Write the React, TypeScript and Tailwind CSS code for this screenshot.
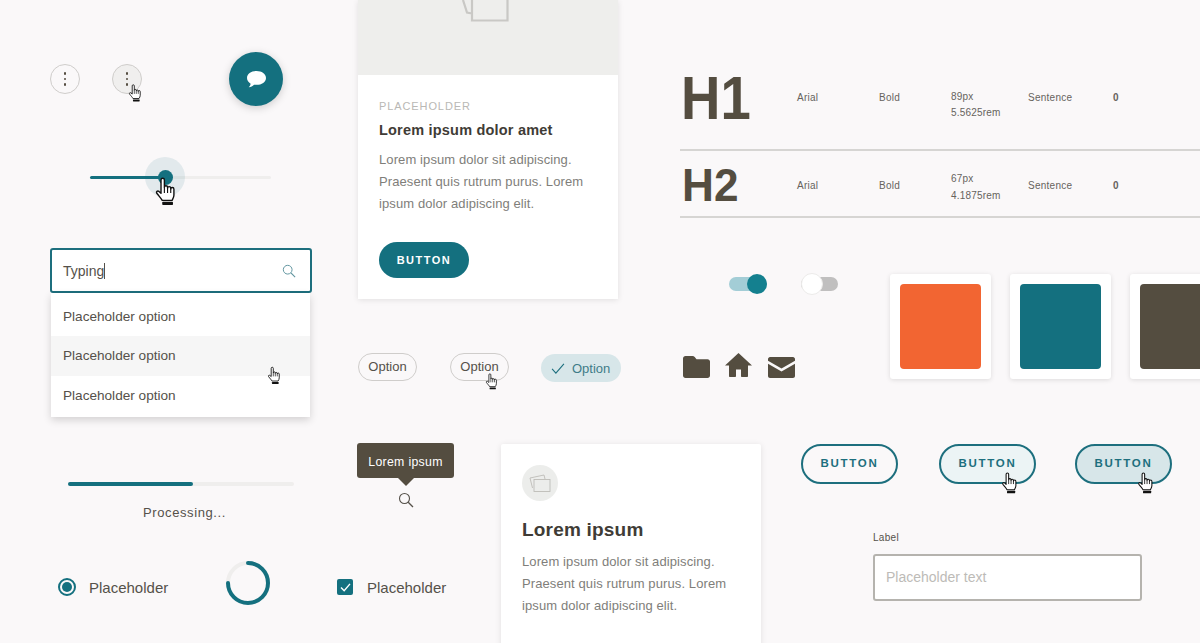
import React from "react";

function Hand({ className }: { className: string }) {
  return (
    <svg viewBox="0 0 24 31" className={className}>
      <path
        d="M7.2 3.2a1.8 1.8 0 0 1 3.6 0V11a1.7 1.7 0 0 1 3.4 0v1a1.7 1.7 0 0 1 3.4 0v1a1.7 1.7 0 0 1 3.4 0v6.5c0 2.2-1 3.6-2 5.5H8.5c-1-2-3.2-4.2-5.8-7.6-1.1-1.6.8-3.2 2.3-2l2.2 2z"
        fill="#fff"
        stroke="#111"
        strokeWidth="1.5"
        strokeLinejoin="round"
      />
      <path d="M10.8 11v6M14.2 12v5M17.6 13v4" stroke="#111" strokeWidth="1.2" fill="none" />
      <rect x="8.5" y="26.5" width="11.5" height="3.5" rx="0.8" fill="#111" />
    </svg>
  );
}

function Kebab({ hover, children }: { hover?: boolean; children?: React.ReactNode }) {
  return (
    <div
      className={`relative flex h-[30px] w-[30px] flex-col items-center justify-center gap-[3px] rounded-full border border-[#cfcdcb] ${
        hover ? "bg-[#f0efee]" : ""
      }`}
    >
      <span className="h-[2.5px] w-[2.5px] rounded-full bg-[#544d40]" />
      <span className="h-[2.5px] w-[2.5px] rounded-full bg-[#544d40]" />
      <span className="h-[2.5px] w-[2.5px] rounded-full bg-[#544d40]" />
      {children}
    </div>
  );
}

function SearchIcon({ className, color }: { className: string; color: string }) {
  return (
    <svg viewBox="0 0 16 16" className={className} fill="none" stroke={color} strokeWidth="1.1">
      <circle cx="6.5" cy="6.5" r="5" />
      <path d="M10.2 10.2 15 15" strokeWidth="1.3" />
    </svg>
  );
}

function MetaRow({ size, rem, big, h, sizeCell }: { size: string; rem: string; big: string; h: string; sizeCell: string }) {
  return (
    <>
      <div className="w-[117px]">
        <div className={big}>{h}</div>
      </div>
      <div className="w-[82px] text-[10px] tracking-[0.25px] text-[#66635d]">Arial</div>
      <div className="w-[72px] text-[10px] tracking-[0.25px] text-[#66635d]">Bold</div>
      <div className={sizeCell}>
        <div>{size}</div>
        <div>{rem}</div>
      </div>
      <div className="w-[85px] text-[10px] tracking-[0.25px] text-[#66635d]">Sentence</div>
      <div className="text-[10px] font-bold text-[#66635d]">0</div>
    </>
  );
}

function OutlineButton({ bg, cursor }: { bg: string; cursor?: boolean }) {
  return (
    <div
      className={`relative flex h-[40px] w-[97px] items-center justify-center rounded-full border-2 border-[#1d6f7e] text-[11.5px] font-bold tracking-[1.7px] text-[#1d6f7e] ${bg}`}
    >
      BUTTON
      {cursor && <Hand className="absolute left-[60px] top-[26px] h-[22px] w-[17px]" />}
    </div>
  );
}

export default function App() {
  return (
    <div className="h-[643px] w-[1200px] overflow-hidden bg-[#faf8f9] font-['Liberation_Sans',Arial,sans-serif]">
      <div className="flex h-[430px] items-start">
        {/* column 1 */}
        <div className="ml-[50px] w-[262px] pt-[52px]">
          <div className="flex items-center">
            <Kebab />
            <div className="ml-[32px]">
              <Kebab hover>
                <Hand className="absolute left-[15px] top-[19px] h-[18px] w-[14px]" />
              </Kebab>
            </div>
            <div className="ml-[87px] flex h-[54px] w-[54px] items-center justify-center rounded-full bg-[#14707f] shadow-[0_2px_8px_rgba(0,0,0,0.18)]">
              <svg viewBox="0 0 22 20" className="h-[19px] w-[21px]" fill="#fff">
                <path d="M11 1c5.5 0 10 3 10 7.3s-4.5 7.3-10 7.3c-.9 0-1.8-.1-2.6-.2-1.5 1.5-3.3 2.4-5.6 2.8 1.1-1 1.8-2.2 2-3.8C2.600 12.800 1 10.700 1 8.300 1 4 5.500 1 11 1z" />
              </svg>
            </div>
          </div>

          <div className="relative ml-[40px] mt-[51px] flex h-[40px] w-[181px] items-center">
            <div className="h-[3px] w-[75px] rounded-l-full bg-[#14707f]" />
            <div className="h-[3px] flex-1 rounded-r-full bg-[#efeeed]" />
            <div className="absolute left-[55px] top-0 flex h-[40px] w-[40px] items-center justify-center rounded-full bg-[#14707f]/10">
              <div className="h-[15px] w-[15px] rounded-full bg-[#14707f]" />
            </div>
            <Hand className="absolute left-[64px] top-[20px] h-[29px] w-[23px]" />
          </div>

          <div className="mt-[51px] flex h-[45px] w-[262px] items-center justify-between rounded-[3px] border-2 border-[#1d6f7e] bg-white pl-[11px] pr-[14px] text-[14px] text-[#55514a]">
            <span className="border-r border-[#55514a] leading-[16px]">Typing</span>
            <SearchIcon className="h-[14px] w-[14px]" color="#5f949e" />
          </div>
          <div className="ml-[1px] w-[259px] bg-white pt-[3px] text-[13.6px] text-[#55514a] shadow-[0_3px_8px_rgba(0,0,0,0.16)]">
            <div className="flex h-[39.500px] items-center pl-[12px] pt-[3px]">Placeholder option</div>
            <div className="relative flex h-[40px] items-center bg-[#f6f6f6] pl-[12px] pt-[1px]">
              Placeholder option
              <Hand className="absolute left-[216px] top-[30px] h-[19px] w-[14px]" />
            </div>
            <div className="flex h-[41px] items-center pl-[12px]">Placeholder option</div>
          </div>
        </div>

        {/* column 2 */}
        <div className="ml-[46px] w-[264px]">
          <div className="w-[260px] bg-white shadow-[0_1px_6px_rgba(0,0,0,0.1)]">
            <div className="h-[75px] bg-[#eeeeec] pl-[104px]">
              <svg viewBox="0 0 50 24" className="h-[24px] w-[50px]" fill="none" stroke="#c9c8c5" strokeWidth="2.200">
                <path d="M1 0 5 12.500l5 1M10 0v20.500h35.500V0" />
              </svg>
            </div>
            <div className="h-[224px] px-[21px] pt-[24px]">
              <div className="text-[11px] leading-[14px] tracking-[0.9px] text-[#b9b8b5]">PLACEHOLDER</div>
              <div className="mt-[8px] text-[14.5px] font-bold leading-[18px] tracking-[0.2px] text-[#3f3c36]">
                Lorem ipsum dolor amet
              </div>
              <div className="mt-[9.5px] text-[13px] leading-[22px] tracking-[0.1px] text-[#807e7a]">
                Lorem ipsum dolor sit adipiscing.
                <br />
                Praesent quis rutrum purus. Lorem
                <br />
                ipsum dolor adipiscing elit.
              </div>
              <div className="mt-[27.5px] flex h-[36px] w-[90px] items-center justify-center rounded-full bg-[#14707f] text-[11px] font-bold tracking-[1.5px] text-white">
                BUTTON
              </div>
            </div>
          </div>
          <div className="mt-[54px] flex items-start text-[13px] text-[#55514a]">
            <div className="flex h-[28px] w-[59px] items-center justify-center rounded-full border border-[#cfcdcb]">Option</div>
            <div className="relative ml-[33px] flex h-[28px] w-[59px] items-center justify-center rounded-full border border-[#cfcdcb]">
              Option
              <Hand className="absolute left-[34px] top-[19px] h-[17px] w-[13px]" />
            </div>
            <div className="ml-[32px] mt-[1px] flex h-[28px] w-[80px] items-center gap-[7px] rounded-full bg-[#d7e6e9] pl-[10px] pt-[1px] text-[#3f7c88]">
              <svg viewBox="0 0 16 13" className="h-[11px] w-[14px]" fill="none" stroke="#1d6f7e" strokeWidth="1.300">
                <path d="M1 7l4.500 5L15 1" />
              </svg>
              Option
            </div>
          </div>
        </div>

        {/* column 3 */}
        <div className="ml-[58px] w-[520px] shrink-0 pt-[49px]">
          <div className="flex h-[102px] items-center border-b-2 border-[#d6d5d3] pb-[4px]">
            <MetaRow
              h="H1"
              size="89px"
              rem="5.5625rem"
              sizeCell="mt-[16px] w-[77px] text-[10px] leading-[16.5px] tracking-[0.2px] text-[#66635d]"
              big="ml-[1px] mt-[2px] origin-left scale-x-[0.88] text-[62px] font-bold leading-none text-[#544d40]"
            />
          </div>
          <div className="flex h-[67px] items-center border-b-2 border-[#d6d5d3] pt-[3px]">
            <MetaRow
              h="H2"
              size="67px"
              rem="4.1875rem"
              sizeCell="mt-[4px] w-[77px] text-[10px] leading-[17px] tracking-[0.2px] text-[#66635d]"
              big="ml-[2px] origin-left scale-x-[0.96] text-[46px] font-bold leading-none text-[#544d40]"
            />
          </div>
          <div className="mt-[56px] flex items-start">
            <div className="w-[210px] shrink-0">
              <div className="flex h-[20px] items-center pl-[49px]">
                <div className="flex h-[14px] w-[38px] items-center justify-end rounded-full bg-[#a3cdd6]">
                  <span className="h-[20px] w-[20px] rounded-full bg-[#14808f]" />
                </div>
                <div className="ml-[34px] flex h-[14px] w-[37px] items-center rounded-full bg-[#c0bfbf]">
                  <span className="h-[22px] w-[22px] rounded-full border border-[#ecebea] bg-white" />
                </div>
              </div>
              <div className="ml-[3px] mt-[59px] flex items-start gap-[15px]">
                <svg viewBox="0 0 27 23" className="mt-[3px] h-[22px] w-[27px]" fill="#544d40" preserveAspectRatio="none">
                  <path d="M2.500 0h7c1 0 1.600.4 2.200 1.100L13.500 3.300h11c1.400 0 2.500 1.100 2.500 2.500v14.700c0 1.400-1.100 2.500-2.500 2.500h-22C1.100 23 0 21.900 0 20.500v-18C0 1.100 1.100 0 2.500 0z" />
                </svg>
                <svg viewBox="0 0 27 24" className="h-[24px] w-[27px]" fill="#544d40">
                  <path d="M13.500 0 27 12.500h-4V23c0 .6-.4 1-1 1h-5c-.6 0-1-.4-1-1v-6.500h-5V23c0 .6-.4 1-1 1H5c-.6 0-1-.4-1-1V12.500H0z" />
                </svg>
                <svg viewBox="0 0 27 21" className="ml-[1px] mt-[4px] h-[21px] w-[27px]">
                  <path fill="#544d40" d="M2 0h23c1 0 2 1 2 2v1.800L13.500 11.500 0 3.800V2C0 1 1 0 2 0zM0 6.800l13.500 7.700L27 6.800V19c0 1.100-.9 2-2 2H2c-1.100 0-2-.9-2-2z" />
                </svg>
              </div>
            </div>
            <div className="flex gap-[19px]">
              <div className="h-[105px] w-[101px] shrink-0 rounded-[3px] bg-white p-[10px] shadow-[0_1px_5px_rgba(0,0,0,0.12)]">
                <div className="h-[85px] rounded-[4px] bg-[#f26532]" />
              </div>
              <div className="h-[105px] w-[101px] shrink-0 rounded-[3px] bg-white p-[10px] shadow-[0_1px_5px_rgba(0,0,0,0.12)]">
                <div className="h-[85px] rounded-[4px] bg-[#14707f]" />
              </div>
              <div className="h-[105px] w-[101px] shrink-0 rounded-[3px] bg-white p-[10px] shadow-[0_1px_5px_rgba(0,0,0,0.12)]">
                <div className="h-[85px] rounded-[4px] bg-[#544d40]" />
              </div>
            </div>
          </div>
        </div>
      </div>

      <div className="flex h-[213px] items-start">
        <div className="ml-[50px] w-[451px] shrink-0 pt-[13px]">
          <div className="flex items-start">
            <div className="ml-[18px] w-[226px] pt-[39px]">
              <div className="h-[4px] rounded-full bg-[#efeeed]">
                <div className="h-[4px] w-[125px] rounded-full bg-[#14707f]" />
              </div>
              <div className="mt-[19px] pl-[7px] text-center text-[13px] leading-[16px] tracking-[0.6px] text-[#55514a]">Processing...</div>
            </div>
            <div className="ml-[63px] flex w-[97px] flex-col items-center">
              <div className="flex h-[35px] w-[97px] items-center justify-center rounded-[3px] bg-[#544d40] pt-[3px] text-[12.3px] tracking-[0.3px] text-white">
                Lorem ipsum
              </div>
              <svg viewBox="0 0 16 8" className="h-[8px] w-[16px]" fill="#544d40">
                <path d="M0 0h16L8 8z" />
              </svg>
              <SearchIcon className="mt-[6px] h-[16px] w-[16px]" color="#55514a" />
            </div>
          </div>
          <div className="mt-[46px] flex items-center text-[15px] text-[#55514a]">
            <div className="ml-[8px] mt-[2px] flex h-[18px] w-[18px] items-center justify-center rounded-full border-2 border-[#14707f]">
              <span className="h-[10px] w-[10px] rounded-full bg-[#14707f]" />
            </div>
            <span className="ml-[13px] w-[79px] pt-[5px]">Placeholder</span>
            <svg viewBox="0 0 44 44" className="ml-[58px] mt-[-6px] h-[44px] w-[44px]" fill="none" strokeWidth="4">
              <circle cx="22" cy="22" r="20" stroke="#efeeed" />
              <path d="M22 2a20 20 0 1 1-20 20" stroke="#14707f" strokeLinecap="round" />
            </svg>
            <div className="ml-[67px] mt-[2px] flex h-[16px] w-[16px] items-center justify-center rounded-[2px] bg-[#14707f]">
              <svg viewBox="0 0 12 10" className="h-[9px] w-[11px]" fill="none" stroke="#fff" strokeWidth="1.600">
                <path d="M1 5l3.500 3.500L11 1" />
              </svg>
            </div>
            <span className="ml-[14px] pt-[5px]">Placeholder</span>
          </div>
        </div>

        <div className="mt-[14px] h-[260px] w-[260px] shrink-0 rounded-[2px] bg-white px-[21px] pt-[21px] shadow-[0_1px_6px_rgba(0,0,0,0.1)]">
          <div className="flex h-[36px] w-[36px] items-center justify-center rounded-full bg-[#ecedeb]">
            <svg viewBox="0 0 22 20" className="h-[20px] w-[22px]" fill="none" stroke="#bdbcb8" strokeWidth="0.900">
              <path d="M3.500 15 1 5l14-3 1 4" />
              <rect x="5" y="6.500" width="16" height="12" fill="#ecedeb" />
            </svg>
          </div>
          <div className="mt-[17px] text-[19px] font-bold leading-[24px] tracking-[0.2px] text-[#3f3c36]">Lorem ipsum</div>
          <div className="mt-[9px] text-[13px] leading-[22px] tracking-[0.1px] text-[#807e7a]">
            Lorem ipsum dolor sit adipiscing.
            <br />
            Praesent quis rutrum purus. Lorem
            <br />
            ipsum dolor adipiscing elit.
          </div>
        </div>

        <div className="ml-[40px] pt-[14px]">
          <div className="flex items-start">
            <OutlineButton bg="" />
            <div className="ml-[41px]">
              <OutlineButton bg="bg-[#ecf4f5]" cursor />
            </div>
            <div className="ml-[39px]">
              <OutlineButton bg="bg-[#d7e6e9]" cursor />
            </div>
          </div>
          <div className="ml-[72px] mt-[48px] text-[10px] leading-[12px] tracking-[0.3px] text-[#55514a]">Label</div>
          <div className="ml-[72px] mt-[10px] flex h-[47px] w-[269px] items-center rounded-[3px] border-2 border-[#b5b3ae] bg-white pl-[11px] text-[14px] text-[#bdbbb7]">
            Placeholder text
          </div>
        </div>
      </div>
    </div>
  );
}
